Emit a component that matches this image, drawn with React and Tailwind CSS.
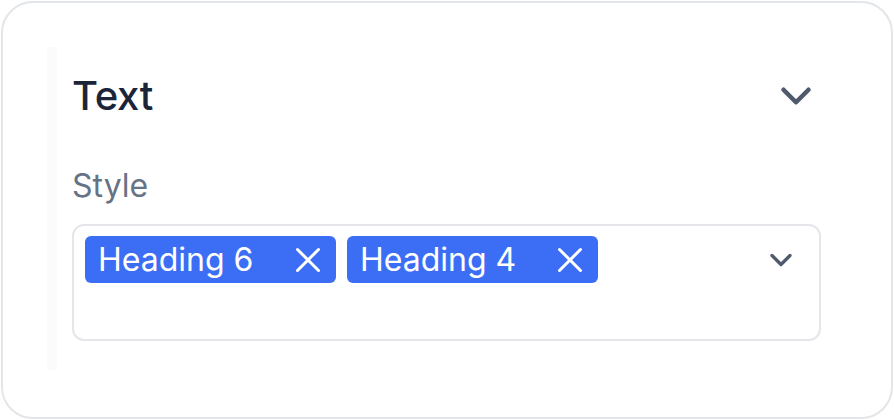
import { ChevronDown, X } from "lucide-react";

const tags = ["Heading 6", "Heading 4"];

const Tag = ({ label }) => (
  <div className="flex h-[47px] w-[251px] items-center justify-between rounded-[6px] bg-[#3b6ef4] pl-[13px] pr-[7px] text-white">
    <span className="text-[32px] leading-none">{label}</span>
    <X size={42} strokeWidth={1.7} />
  </div>
);

export default function App() {
  return (
    <div className="h-[420px] w-[894px] bg-white p-px" style={{ fontFamily: "Inter, 'Noto Sans', sans-serif" }}>
      <div className="h-full rounded-[32px] border-2 border-[#e2e5e9] pl-[44px] pt-[44px]">
        <div className="h-[323px] w-[774px] border-l-[10px] border-[#fbfbfc] pl-[15px] pt-[24px]">
          {/* header */}
          <div className="flex items-center justify-between">
            <h2 className="text-[40px] leading-[44px] font-medium tracking-[-0.3px] text-[#1b2539]">Text</h2>
            <ChevronDown size={50} strokeWidth={2.2} className="text-[#4f5b6d]" />
          </div>

          <div className="mt-[48px] text-[32px] leading-[34px] text-[#667385]">Style</div>

          <div className="mt-[21px] flex h-[117px] items-start justify-between rounded-[12px] border-2 border-[#e4e6ea] pl-[11px] pr-[20px] pt-[10px]">
            <div className="flex gap-[11px]">
              {tags.map((t) => (
                <Tag key={t} label={t} />
              ))}
            </div>
            <ChevronDown size={36} strokeWidth={2.2} className="mt-[6px] text-[#4f5b6d]" />
          </div>
        </div>
      </div>
    </div>
  );
}
